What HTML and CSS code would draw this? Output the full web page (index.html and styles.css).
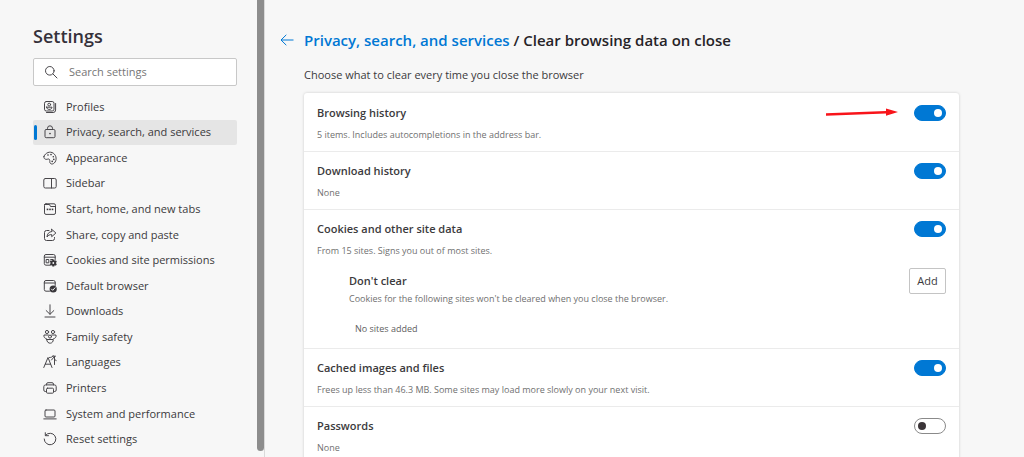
FILE: index.html
```html
<!DOCTYPE html>
<html lang="en">
<head>
<meta charset="utf-8">
<title>Settings</title>
<link rel="stylesheet" href="styles.css">
</head>
<body>
<div class="app">
  <aside class="sidebar">
    <h1 class="sidebar-title">Settings</h1>
    <label class="search">
      <svg class="icon" viewBox="0 0 14 14"><circle cx="5.8" cy="5.8" r="4.3"/><path d="M9 9l4 4"/></svg>
      <input class="search-input" type="search" placeholder="Search settings" aria-label="Search settings">
    </label>
    <nav class="nav">
      <a class="nav-item" href="#"><svg class="icon" viewBox="0 0 14 14"><rect x="1.5" y="1.5" width="9.5" height="9.5" rx="1.8"/><circle cx="6.2" cy="4.6" r="1.4"/><path d="M3.5 7.2h5.5c0 3-5.500 3-5.500 0zM12.600 3.500v6.500a2.500 2.500 0 0 1-2.500 2.500H3.500"/></svg>Profiles</a>
      <a class="nav-item selected" href="#" aria-current="page"><svg class="icon" viewBox="0 0 14 14"><rect x="2" y="4.500" width="10" height="8.200" rx="1.200"/><path d="M4.500 4.500V3.300a2.500 2.500 0 0 1 5 0v1.200"/><circle class="solid" cx="7" cy="8.600" r=".8"/></svg>Privacy, search, and services</a>
      <a class="nav-item" href="#"><svg class="icon" viewBox="0 0 14 14"><path d="M1 5.300C2.500 1.500 7 0 10.300 2.200c3.500 2.400 3.600 7.300 1 9.800-2.200 2-4.800.8-4.500-1.500.3-1.800-.6-2.900-2-2.400C2.300 9 .3 7.500 1 5.300z"/><g class="solid"><circle cx="5" cy="4" r=".8"/><circle cx="8" cy="3.600" r=".8"/><circle cx="10.300" cy="5.700" r=".8"/><circle cx="10.800" cy="8.400" r=".8"/><circle cx="9.200" cy="10.400" r=".8"/></g></svg>Appearance</a>
      <a class="nav-item" href="#"><svg class="icon" viewBox="0 0 14 14"><rect x=".8" y="2.500" width="12.400" height="9.500" rx="1.500"/><path d="M8.500 2.500V12"/></svg>Sidebar</a>
      <a class="nav-item" href="#"><svg class="icon" viewBox="0 0 14 14"><rect x="1.500" y="1.800" width="11" height="10.600" rx="1.500"/><path d="M1.500 2.500h5l1 2h5"/><g class="solid"><rect x="3.700" y="6.600" width="1.600" height="1.600"/><rect x="6.200" y="6.600" width="1.600" height="1.600"/><rect x="8.700" y="6.600" width="1.600" height="1.600"/></g></svg>Start, home, and new tabs</a>
      <a class="nav-item" href="#"><svg class="icon" viewBox="0 0 14 14"><path d="M6 2.500H3.500a2 2 0 0 0-2 2v6a2 2 0 0 0 2 2h6a2 2 0 0 0 2-2V9.500"/><path d="M8.700 1.300l4.200 3.700-4.200 3.700V6.600C6.500 6.500 5 7.400 4 9c.2-3 1.700-5.200 4.700-5.500z"/></svg>Share, copy and paste</a>
      <a class="nav-item" href="#"><svg class="icon" viewBox="0 0 14 14"><path d="M7 12.200H3a1.700 1.700 0 0 1-1.700-1.700V3A1.700 1.700 0 0 1 3 1.500h7.500A1.700 1.700 0 0 1 12.200 3v3.500M1.300 4.200h10.900M3.500 6.500h2.300v3.300H3.500zM7.700 6.500h2"/><circle class="solid" cx="10.300" cy="10" r="2.700"/><path class="gear" d="M10.300 6.500v7M7.200 8.200l6.200 3.600M13.400 8.200l-6.200 3.600"/><circle class="paper" cx="10.300" cy="10" r=".9"/></svg>Cookies and site permissions</a>
      <a class="nav-item" href="#"><svg class="icon" viewBox="0 0 14 14"><path d="M6.500 12.200H3a1.700 1.700 0 0 1-1.700-1.700V3A1.700 1.700 0 0 1 3 1.500h7.500A1.700 1.700 0 0 1 12.200 3v3.500M1.300 4h10.900"/><circle class="solid" cx="10.200" cy="10" r="3.600"/><path class="tick" d="M8.500 10.100l1.200 1.200 2.300-2.500"/></svg>Default browser</a>
      <a class="nav-item" href="#"><svg class="icon" viewBox="0 0 14 14"><path d="M7 .8v9.400M3.200 6.600L7 10.300l3.800-3.700M2 13h10"/></svg>Downloads</a>
      <a class="nav-item" href="#"><svg class="icon" viewBox="0 0 14 14"><circle cx="4" cy="2" r="1.600"/><circle cx="10" cy="2" r="1.600"/><circle cx="7" cy="6.600" r="1.500"/><path d="M5.300 5H1c-.5 2 .8 3.500 2.300 3.700M8.700 5H13c.5 2-.8 3.500-2.300 3.700M3.700 9.500h6.600c0 5-6.600 5-6.600 0z"/></svg>Family safety</a>
      <a class="nav-item" href="#"><svg class="icon" viewBox="0 0 14 14"><path d="M.8 12.500L5 2.500l4 10M2.300 9.200h5.300M6.500 2.500c2 0 3-.6 3.700-1.700M9.500 1.200h3M8.500 5l3-3.500M11.500 2v7.500M11.500 4.500l1.700 1"/></svg>Languages</a>
      <a class="nav-item" href="#"><svg class="icon" viewBox="0 0 14 14"><path d="M3.500 10.500H2.300A1.500 1.500 0 0 1 .8 9V5.700a1.800 1.800 0 0 1 1.800-1.800h8.800a1.800 1.800 0 0 1 1.800 1.800V9a1.500 1.500 0 0 1-1.500 1.500h-1.200M3.500 3.900v-.7a1.500 1.500 0 0 1 1.500-1.500h4a1.500 1.500 0 0 1 1.500 1.500v.7"/><rect x="3.500" y="7.200" width="7" height="5" rx="1"/></svg>Printers</a>
      <a class="nav-item" href="#"><svg class="icon" viewBox="0 0 14 14"><rect x="2" y="3" width="10" height="7" rx="1"/><path d="M.8 11.900h12.400"/></svg>System and performance</a>
      <a class="nav-item" href="#"><svg class="icon" viewBox="0 0 14 14"><path d="M2.600 3.200A5.800 5.800 0 1 1 1.200 7M2.300.7v3h3.200"/></svg>Reset settings</a>
    </nav>
  </aside>
  <div class="scrollbar"><div class="scrollbar-thumb"></div></div>
  <main class="main">
    <header class="page-head">
      <a class="back" href="#" aria-label="Back"><svg class="back-icon" viewBox="0 0 14 12"><path d="M13.500 6H1M6.300 .8L1 6l5.300 5.200"/></svg></a>
      <h2 class="crumbs"><a class="crumb-link" href="#">Privacy, search, and services</a> / Clear browsing data on close</h2>
    </header>
    <div class="content">
      <p class="intro">Choose what to clear every time you close the browser</p>
      <div class="card">
        <section class="row">
          <div class="row-text"><label class="row-title" for="history">Browsing history</label><p class="row-desc">5 items. Includes autocompletions in the address bar.</p></div>
          <svg class="pointer" viewBox="0 0 72 10"><path d="M0 5.300L60 3V.500L72 4 60 7.800V5.500L0 7.800z"/></svg>
          <input class="toggle" type="checkbox" role="switch" id="history" checked>
        </section>
        <section class="row">
          <div class="row-text"><label class="row-title" for="downloads">Download history</label><p class="row-desc">None</p></div>
          <input class="toggle" type="checkbox" role="switch" id="downloads" checked>
        </section>
        <section class="row">
          <div class="row-text"><label class="row-title" for="cookies">Cookies and other site data</label><p class="row-desc">From 15 sites. Signs you out of most sites.</p></div>
          <input class="toggle" type="checkbox" role="switch" id="cookies" checked>
          <div class="exceptions">
            <div class="exceptions-text">
              <h3 class="row-title">Don't clear</h3>
              <p class="row-desc">Cookies for the following sites won't be cleared when you close the browser.</p>
              <p class="empty">No sites added</p>
            </div>
            <button class="add" type="button">Add</button>
          </div>
        </section>
        <section class="row">
          <div class="row-text"><label class="row-title" for="cache">Cached images and files</label><p class="row-desc">Frees up less than 46.3 MB. Some sites may load more slowly on your next visit.</p></div>
          <input class="toggle" type="checkbox" role="switch" id="cache" checked>
        </section>
        <section class="row">
          <div class="row-text"><label class="row-title" for="passwords">Passwords</label><p class="row-desc">None</p></div>
          <input class="toggle" type="checkbox" role="switch" id="passwords">
        </section>
      </div>
    </div>
  </main>
</div>
</body>
</html>
```
FILE: styles.css
```css
* { box-sizing: border-box; }

body {
  margin: 0;
  background: #f7f7f7;
  color: #3b3a3c;
  font-family: "Open Sans", "Noto Sans", sans-serif;
  font-size: 11px;
  line-height: 16px;
}

h1, h2, h3, p { margin: 0; }

a { color: inherit; text-decoration: none; }

.app {
  display: flex;
  height: 100vh;
  overflow: hidden;
}

.sidebar {
  flex: none;
  width: 257px;
  padding: 24px 20px 0 33px;
}

.sidebar-title {
  margin-bottom: 10px;
  font-size: 18px;
  font-weight: 600;
  line-height: 24px;
  color: #35313a;
}

.search {
  display: flex;
  align-items: center;
  gap: 11px;
  height: 28px;
  padding: 0 10px;
  border: 1px solid #c8c8c8;
  border-radius: 2px;
  background: #fff;
}

.search-input {
  flex: 1;
  min-width: 0;
  padding: 0;
  border: 0;
  outline: 0;
  background: none;
  font: inherit;
}

.search-input::placeholder { color: #767676; }

.icon {
  flex: none;
  width: 14px;
  height: 14px;
  fill: none;
  stroke: #48464a;
  stroke-width: 1;
  stroke-linecap: round;
  stroke-linejoin: round;
}

.icon .solid { fill: #38363a; stroke: none; }
.icon .gear { stroke: #38363a; stroke-width: 2; stroke-linecap: butt; }
.icon .paper { fill: #f7f7f7; stroke: none; }
.icon .tick { stroke: #f7f7f7; }

.nav {
  display: grid;
  grid-auto-rows: 1fr;
  height: 358px;
  margin-top: 8px;
}

.nav-item {
  position: relative;
  display: flex;
  align-items: center;
  gap: 9px;
  padding-left: 10px;
  border-radius: 2px;
}

.selected { background: #e5e5e5; }

.selected::before {
  content: "";
  position: absolute;
  left: 1px;
  top: 5px;
  bottom: 5px;
  width: 3px;
  border-radius: 2px;
  background: #0078d4;
}

.scrollbar {
  flex: none;
  width: 8px;
  padding-bottom: 6px;
  border-right: 1px solid #dadada;
}

.scrollbar-thumb {
  height: 100%;
  border-radius: 0 0 4px 4px;
  background: #8d8d8d;
}

.main {
  flex: 1;
  min-width: 0;
  padding: 28px 24px 0 15px;
}

.page-head {
  display: flex;
  align-items: center;
  gap: 10px;
}

.back { display: flex; }

.back-icon {
  width: 14px;
  height: 12px;
  fill: none;
  stroke: #0078d4;
  stroke-width: 1;
}

.crumbs {
  font-size: 15px;
  font-weight: 600;
  line-height: 24px;
  color: #262327;
}

.crumb-link { color: #0078d4; }

.content {
  max-width: 679px;
  padding: 15px 0 0 24px;
}

.card {
  margin-top: 10px;
  padding-top: 1px;
  border-radius: 3px;
  background: #fff;
  box-shadow: 0 0 3px rgba(0, 0, 0, 0.18);
}

.row {
  display: flex;
  flex-wrap: wrap;
  align-items: flex-start;
  padding: 11px 13px 8px;
  border-bottom: 1px solid #ebebeb;
}

.row-text {
  flex: 1;
  min-width: 0;
}

.row-title {
  display: block;
  font-size: 11px;
  font-weight: 600;
  line-height: 16px;
}

.row-desc {
  margin-top: 6px;
  font-size: 9px;
  color: #707070;
}

.pointer {
  width: 72px;
  height: 10px;
  margin: 3px 16px 0 0;
  fill: #f8141a;
}

.toggle {
  appearance: none;
  display: flex;
  align-items: center;
  width: 32px;
  height: 16px;
  margin: 0;
  padding: 0 3px;
  border: 1px solid #8a8a8a;
  border-radius: 8px;
  background: #fff;
}

.toggle::before {
  content: "";
  width: 8px;
  height: 8px;
  border-radius: 50%;
  background: #3b3538;
}

.toggle:checked {
  justify-content: flex-end;
  border-color: #0078d4;
  background: #0078d4;
}

.toggle:checked::before { background: #fff; }

.exceptions {
  display: flex;
  align-items: flex-start;
  width: 100%;
  padding: 9px 0 3px 32px;
}

.exceptions-text {
  flex: 1;
  padding-top: 5px;
}

.exceptions .row-desc { margin-top: 2px; }

.empty {
  margin-top: 14px;
  padding-left: 6px;
  font-size: 9px;
  color: #606060;
}

.add {
  width: 37px;
  height: 26px;
  padding: 0;
  border: 1px solid #c4c4c4;
  border-radius: 2px;
  background: #fff;
  color: #3b3a3c;
  font: inherit;
}
```
